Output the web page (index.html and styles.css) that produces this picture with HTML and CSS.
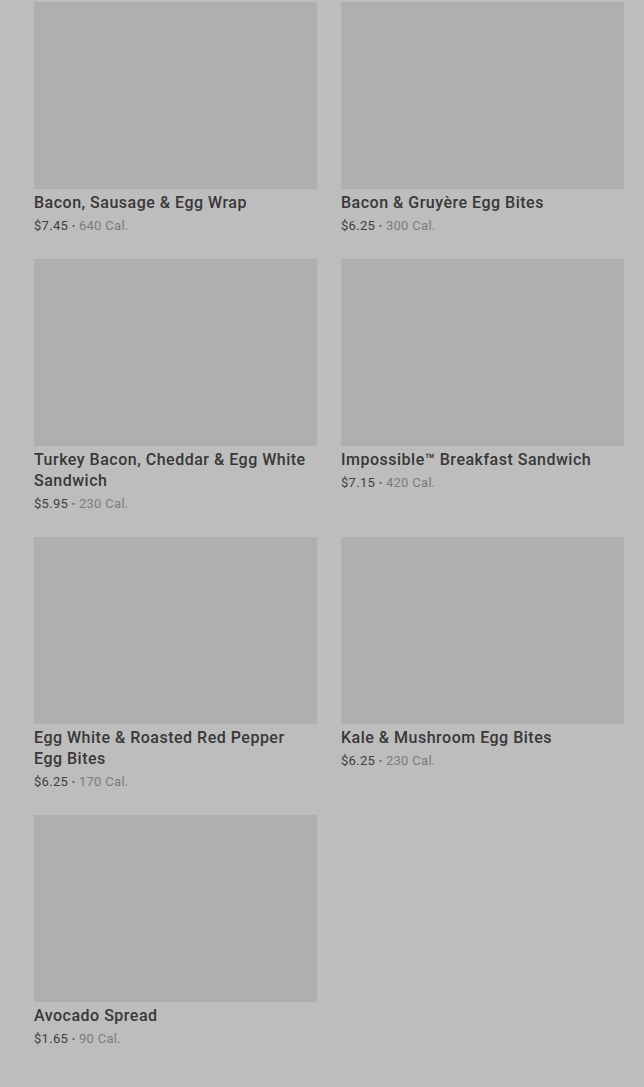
FILE: index.html
```html
<!DOCTYPE html>
<html lang="en">
<head>
    <meta charset="UTF-8">
    <meta name="viewport" content="width=device-width, initial-scale=1.0">
    <title>Breakfast</title>
    <link rel="stylesheet" href="styles.css">
</head>
<body>
    <div class="menu-grid">
        <div class="product">
            <div class="product-image"></div>
            <div class="product-name">Bacon, Sausage &amp; Egg Wrap</div>
            <div class="product-meta"><span class="price">$7.45</span> <span class="dot">•</span> <span class="cal">640 Cal.</span></div>
        </div>
        <div class="product">
            <div class="product-image"></div>
            <div class="product-name">Bacon &amp; Gruyère Egg Bites</div>
            <div class="product-meta"><span class="price">$6.25</span> <span class="dot">•</span> <span class="cal">300 Cal.</span></div>
        </div>
        <div class="product">
            <div class="product-image"></div>
            <div class="product-name">Turkey Bacon, Cheddar &amp; Egg White Sandwich</div>
            <div class="product-meta"><span class="price">$5.95</span> <span class="dot">•</span> <span class="cal">230 Cal.</span></div>
        </div>
        <div class="product">
            <div class="product-image"></div>
            <div class="product-name">Impossible™ Breakfast Sandwich</div>
            <div class="product-meta"><span class="price">$7.15</span> <span class="dot">•</span> <span class="cal">420 Cal.</span></div>
        </div>
        <div class="product">
            <div class="product-image"></div>
            <div class="product-name">Egg White &amp; Roasted Red Pepper Egg Bites</div>
            <div class="product-meta"><span class="price">$6.25</span> <span class="dot">•</span> <span class="cal">170 Cal.</span></div>
        </div>
        <div class="product">
            <div class="product-image"></div>
            <div class="product-name">Kale &amp; Mushroom Egg Bites</div>
            <div class="product-meta"><span class="price">$6.25</span> <span class="dot">•</span> <span class="cal">230 Cal.</span></div>
        </div>
        <div class="product">
            <div class="product-image"></div>
            <div class="product-name">Avocado Spread</div>
            <div class="product-meta"><span class="price">$1.65</span> <span class="dot">•</span> <span class="cal">90 Cal.</span></div>
        </div>
    </div>
</body>
</html>
```

FILE: styles.css
```css
* {
    margin: 0;
    padding: 0;
    box-sizing: border-box;
}

body {
    font-family: Roboto, "Liberation Sans", sans-serif;
    background-color: #bdbdbd;
    height: 1087px;
    overflow: hidden;
}

.menu-grid {
    display: grid;
    grid-template-columns: 283px 283px;
    column-gap: 24px;
    padding: 2px 20px 0 34px;
}

.product {
    padding-bottom: 24px;
}

.product-image {
    height: 187px;
    background-color: #afafaf;
}

.product-name {
    margin-top: 3px;
    font-size: 16px;
    line-height: 21px;
    font-weight: 500;
    letter-spacing: 0.5px;
    color: #383838;
}

.product-meta {
    margin-top: 4px;
    height: 18px;
    font-size: 13px;
    line-height: 18px;
    letter-spacing: 0.3px;
}

.price {
    color: #404040;
}

.dot {
    color: #6a6a6a;
    font-size: 10px;
}

.cal {
    color: #7c7c7c;
}
```
